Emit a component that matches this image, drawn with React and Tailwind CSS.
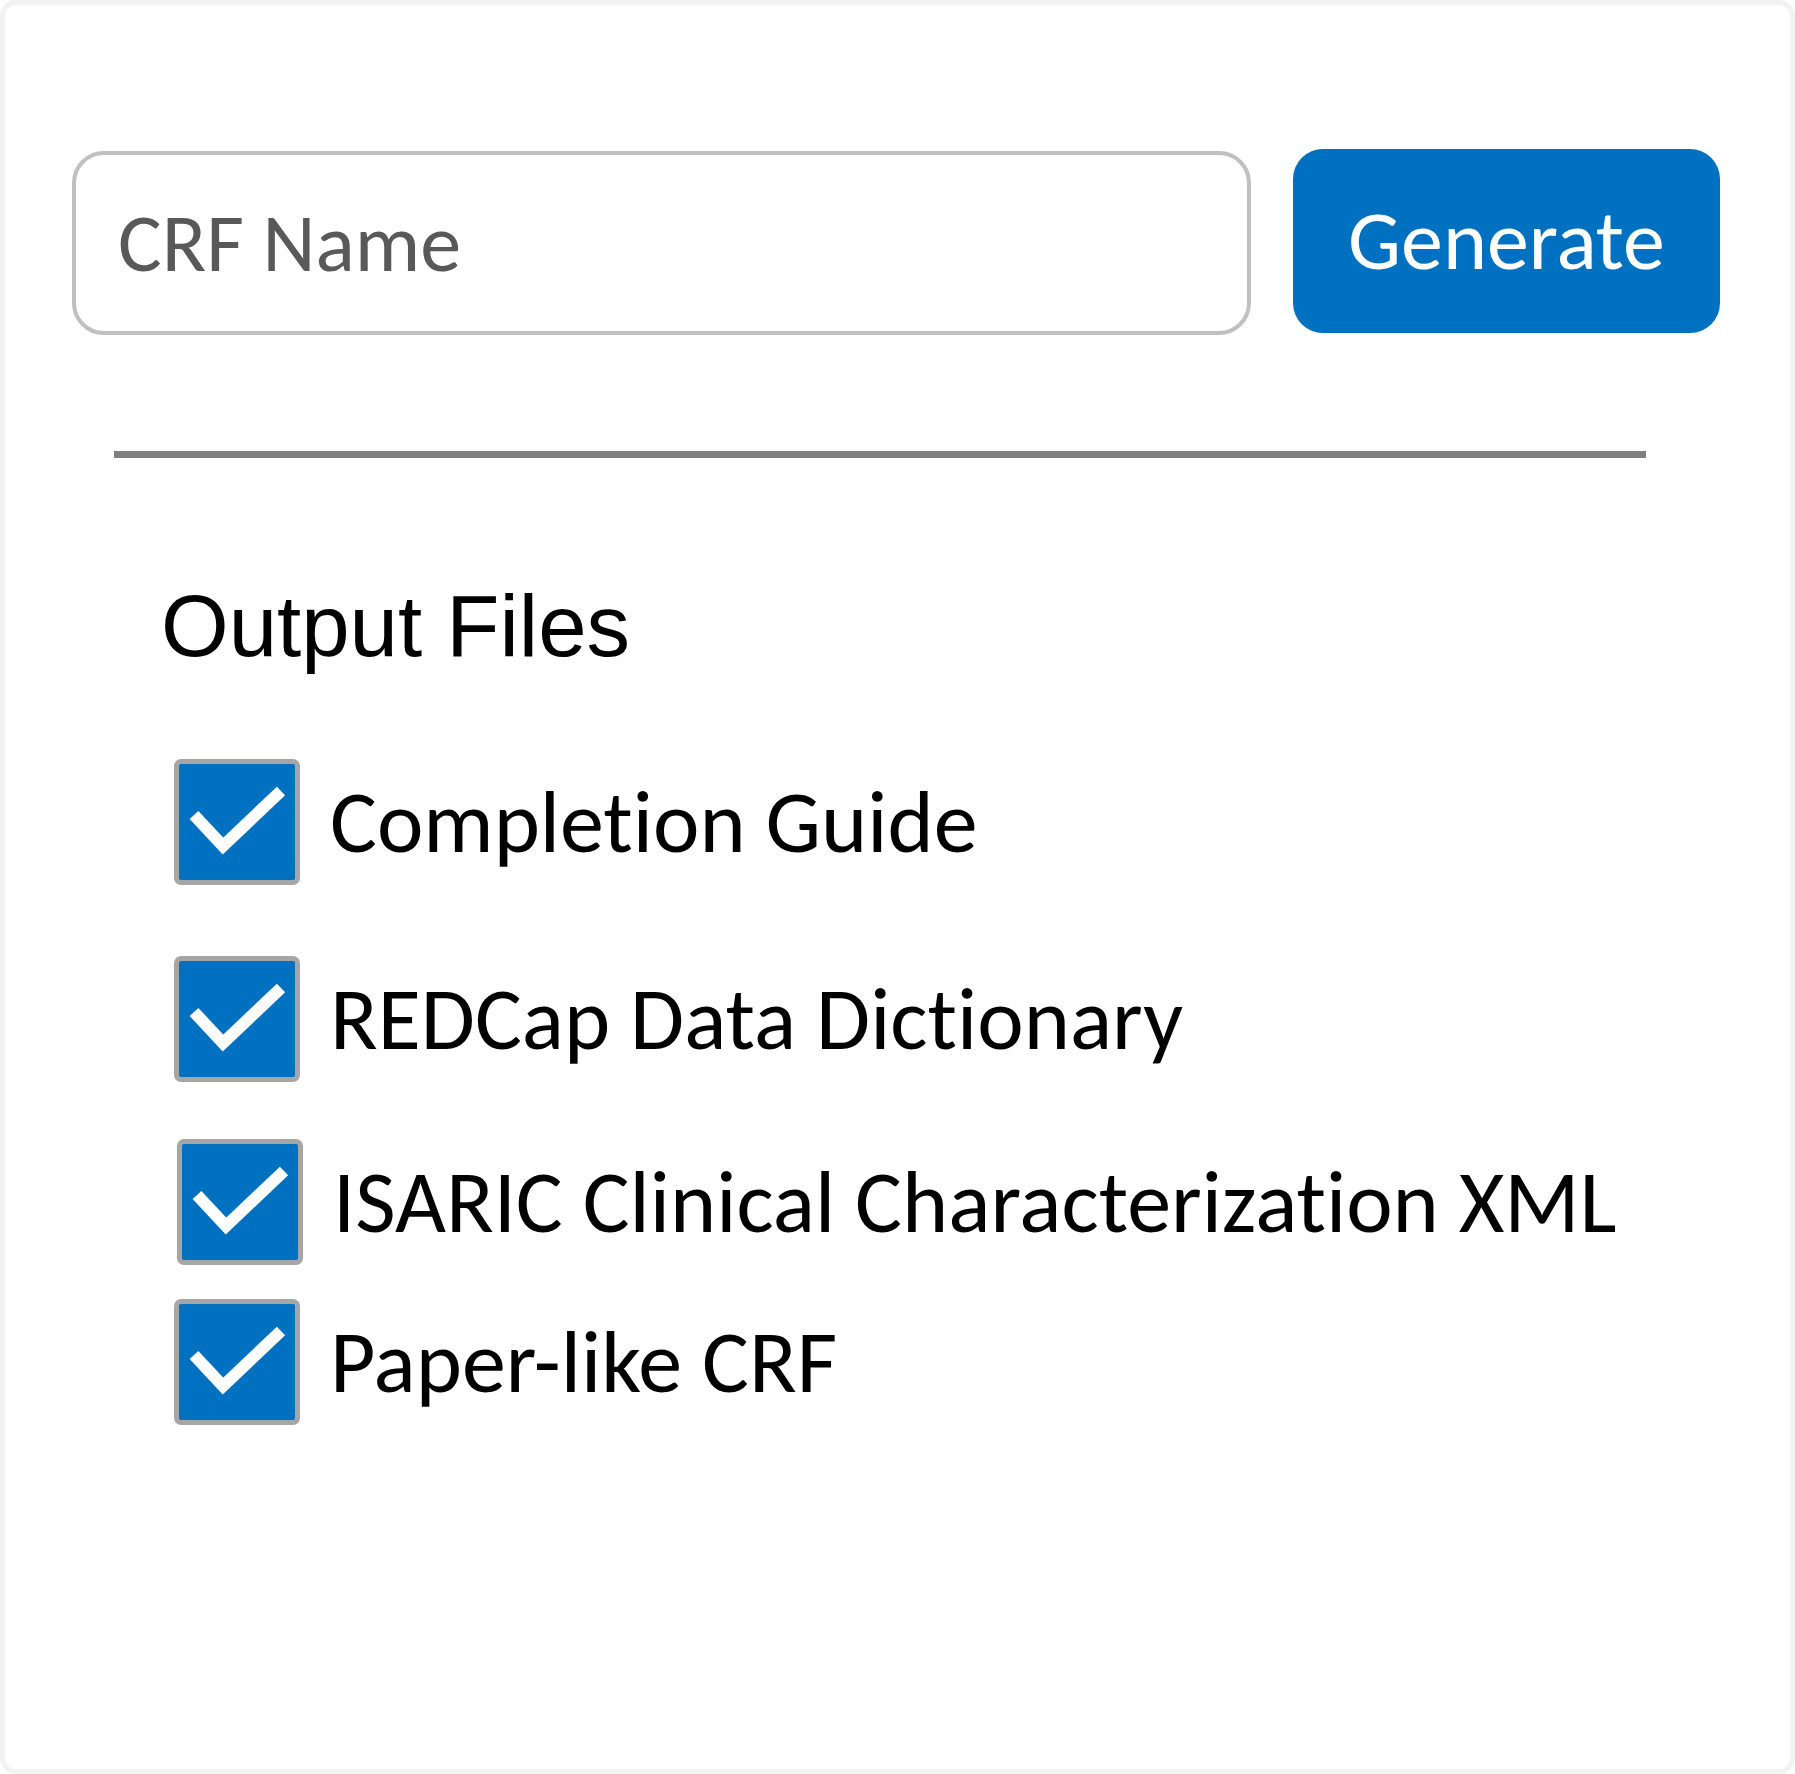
import { useState } from "react";

const ITEMS = [
  { id: "guide", label: "Completion Guide", gap: "mt-[90px]", shift: "" },
  { id: "redcap", label: "REDCap Data Dictionary", gap: "mt-[71px]", shift: "" },
  { id: "isaric", label: "ISARIC Clinical Characterization XML", gap: "mt-[57px]", shift: "ml-[3px]" },
  { id: "paper", label: "Paper-like CRF", gap: "mt-[34px]", shift: "" },
];

const Check = ({ checked, onToggle }) => (
  <button
    onClick={onToggle}
    className={`w-[126px] h-[126px] shrink-0 rounded-[7px] border-[5px] border-[#a6a6a6] flex items-center justify-center ${
      checked ? "bg-[#0070c0]" : "bg-white"
    }`}
  >
    {checked && (
      <svg width="126" height="126" viewBox="0 0 126 126" className="shrink-0">
        <polyline
          points="20,56 49,87 107,32"
          fill="none"
          stroke="#ffffff"
          strokeWidth="12"
          strokeLinecap="butt"
          strokeLinejoin="miter"
        />
      </svg>
    )}
  </button>
);

export default function App() {
  const [name, setName] = useState("");
  const [checked, setChecked] = useState({ guide: true, redcap: true, isaric: true, paper: true });

  return (
    <div className="w-[1795px] h-[1774px] bg-white border-[5px] border-[#f2f2f2] rounded-[16px] font-['Carlito','Calibri','Lato',sans-serif] [font-variant-ligatures:none]">
      <div className="flex items-start pl-[67px] pt-[144px]">
        <input
          value={name}
          onChange={(e) => setName(e.target.value)}
          placeholder="CRF Name"
          className="mt-[2px] w-[1179px] h-[184px] pl-[42px] rounded-[32px] border-[4px] border-[#c0c0c0] text-[82px] text-[#595959] placeholder:text-[#595959] outline-none [font-variant-ligatures:none]"
        />
        <button className="ml-[42px] w-[427px] h-[184px] rounded-[30px] bg-[#0070c0] text-white text-[84px] leading-none">
          Generate
        </button>
      </div>

      <div className="mt-[116px] ml-[109px] w-[1532px] h-[7px] bg-[#808080]" />

      <div className="mt-[124px] ml-[156px] h-[87px] text-[87px] leading-[87px] text-black font-['Liberation_Sans',Arial,sans-serif]">
        Output Files
      </div>

      <div className="pl-[169px] flex flex-col">
        {ITEMS.map((it) => (
          <div key={it.id} className={`flex items-center ${it.gap} ${it.shift}`}>
            <Check
              checked={checked[it.id]}
              onToggle={() => setChecked((c) => ({ ...c, [it.id]: !c[it.id] }))}
            />
            <span className="ml-[30px] text-[88px] leading-none text-black whitespace-nowrap">{it.label}</span>
          </div>
        ))}
      </div>
    </div>
  );
}
